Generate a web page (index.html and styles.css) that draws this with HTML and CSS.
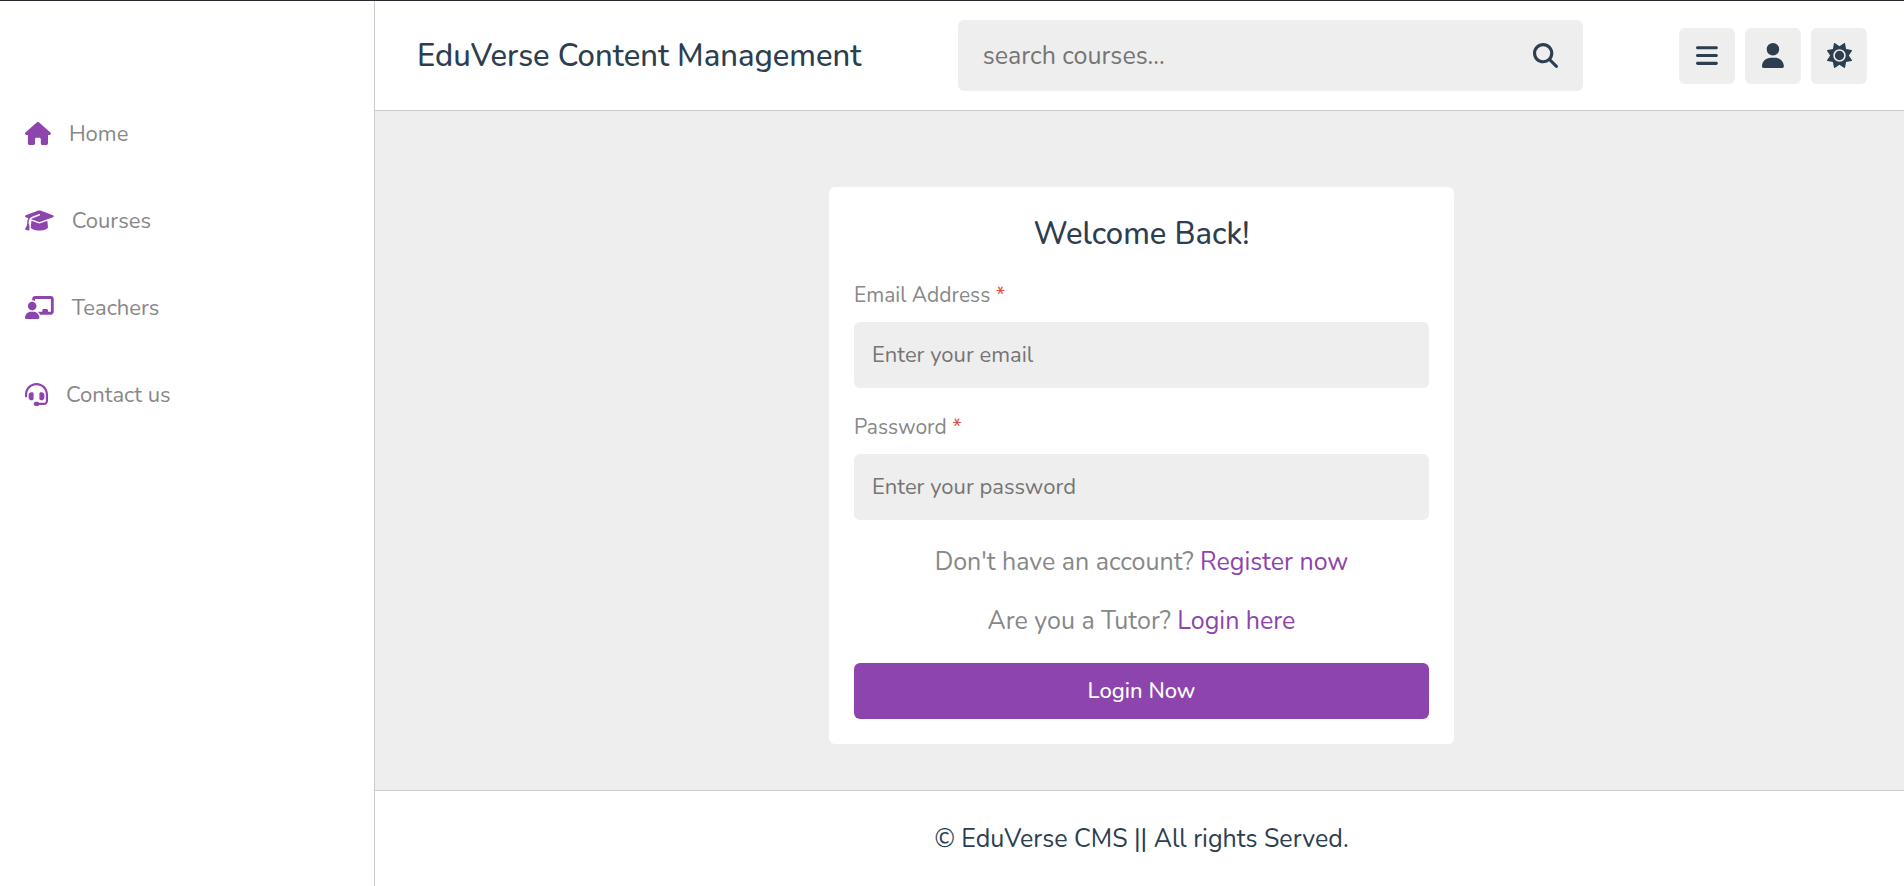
FILE: index.html
```html
<!DOCTYPE html>
<html lang="en">
<head>
<meta charset="utf-8">
<meta name="viewport" content="width=device-width, initial-scale=1">
<title>EduVerse Content Management</title>
<link rel="stylesheet" href="styles.css">
</head>
<body class="page">
<aside class="sidebar">
  <nav class="nav">
    <a class="nav-link" href="#"><svg class="nav-icon" viewBox="0 0 576 512" aria-hidden="true"><path d="M575.8 255.5c0 18-15 32.1-32 32.1h-32l.7 160.2c0 2.700-.2 5.400-.5 8.100V472c0 22.100-17.900 40-40 40H456c-1.100 0-2.200 0-3.300-.1c-1.400.1-2.800.1-4.200.1H416 392c-22.100 0-40-17.900-40-40V448 384c0-17.700-14.300-32-32-32H256c-17.700 0-32 14.300-32 32v64 24c0 22.100-17.900 40-40 40H160 128.100c-1.500 0-3-.1-4.500-.2c-1.200.1-2.400.2-3.600.2H104c-22.100 0-40-17.900-40-40V360c0-.9 0-1.900.1-2.800V287.600H32c-18 0-32-14-32-32.100c0-9 3-17 10-24L266.400 8c7-7 15-8 22-8s15 2 21 7L564.800 231.500c8 7 12 15 11 24z"/></svg><span>Home</span></a>
    <a class="nav-link" href="#"><svg class="nav-icon" viewBox="0 0 640 512" aria-hidden="true"><path d="M320 32c-8.100 0-16.100 1.400-23.700 4.100L15.800 137.400C6.300 140.900 0 149.900 0 160s6.300 19.100 15.800 22.600l57.900 20.900C57.300 229.300 48 259.800 48 291.900v28.100c0 28.400-10.800 57.700-22.300 80.800c-6.500 13-13.900 25.800-22.500 37.600C0 442.700-.9 448.300.9 453.400s6 8.900 11.200 10.200l64 16c4.200 1.100 8.700.3 12.400-2s6.300-6.100 7.100-10.400c8.600-42.800 4.300-81.200-2.100-108.700C90.300 344.300 86 329.800 80 316.500V291.900c0-30.200 10.200-58.700 27.900-81.500c12.900-15.500 29.600-28 49.200-35.700l157-61.700c8.200-3.200 17.500.8 20.700 9s-.8 17.500-9 20.700l-157 61.700c-12.400 4.900-23.300 12.400-32.200 21.600l159.600 57.600c7.600 2.700 15.600 4.100 23.700 4.100s16.100-1.400 23.700-4.100L624.200 182.600c9.500-3.400 15.800-12.500 15.800-22.600s-6.300-19.100-15.800-22.600L343.700 36.100C336.100 33.400 328.100 32 320 32zM128 408c0 35.300 86 72 192 72s192-36.700 192-72L496.700 262.600 354.500 314c-11.100 4-22.800 6-34.500 6s-23.500-2-34.500-6L143.300 262.600 128 408z"/></svg><span>Courses</span></a>
    <a class="nav-link" href="#"><svg class="nav-icon" viewBox="0 0 640 512" aria-hidden="true"><path d="M160 64c0-35.300 28.700-64 64-64H576c35.300 0 64 28.700 64 64V352c0 35.300-28.700 64-64 64H336.800c-11.800-25.500-29.900-47.500-52.400-64H384V320c0-17.700 14.300-32 32-32h64c17.700 0 32 14.300 32 32v32h64V64L224 64v49.100C205.200 102.200 183.300 96 160 96V64zm0 64a96 96 0 1 1 0 192 96 96 0 1 1 0-192zM133.300 352h53.300C260.300 352 320 411.700 320 485.300c0 14.700-11.900 26.700-26.700 26.700H26.700C11.900 512 0 500.100 0 485.300C0 411.700 59.700 352 133.300 352z"/></svg><span>Teachers</span></a>
    <a class="nav-link" href="#"><svg class="nav-icon" viewBox="0 0 512 512" aria-hidden="true"><path d="M256 48C141.100 48 48 141.100 48 256v40c0 13.300-10.700 24-24 24s-24-10.700-24-24V256C0 114.600 114.600 0 256 0S512 114.600 512 256V400.100c0 48.600-39.400 88-88.100 88L313.600 488c-8.300 14.300-23.800 24-41.600 24H240c-26.500 0-48-21.500-48-48s21.500-48 48-48h32c17.800 0 33.300 9.700 41.600 24l110.400.1c22.100 0 40-17.900 40-40V256c0-114.900-93.100-208-208-208zM144 208h16c17.700 0 32 14.300 32 32V352c0 17.700-14.300 32-32 32H144c-35.300 0-64-28.700-64-64V272c0-35.300 28.700-64 64-64zm224 0c35.300 0 64 28.700 64 64v48c0 35.300-28.700 64-64 64H352c-17.700 0-32-14.300-32-32V240c0-17.700 14.300-32 32-32h16z"/></svg><span>Contact us</span></a>
  </nav>
</aside>
<div class="content">
  <header class="header">
    <a class="logo" href="#">EduVerse Content Management</a>
    <form class="search">
      <input class="search-input" type="search" placeholder="search courses..." aria-label="Search courses">
      <button class="search-button" type="submit" aria-label="Search"><svg class="icon" viewBox="0 0 512 512" aria-hidden="true"><path d="M416 208c0 45.900-14.900 88.300-40 122.700L502.600 457.400c12.500 12.500 12.500 32.800 0 45.300s-32.800 12.500-45.300 0L330.700 376c-34.400 25.200-76.800 40-122.700 40C93.100 416 0 322.900 0 208S93.100 0 208 0S416 93.100 416 208zM208 352a144 144 0 1 0 0-288 144 144 0 1 0 0 288z"/></svg></button>
    </form>
    <div class="actions">
      <button class="action" type="button" aria-label="Menu"><svg class="icon" viewBox="0 0 448 512" aria-hidden="true"><path d="M0 96C0 78.300 14.300 64 32 64H416c17.700 0 32 14.300 32 32s-14.300 32-32 32H32C14.300 128 0 113.700 0 96zM0 256c0-17.700 14.300-32 32-32H416c17.700 0 32 14.300 32 32s-14.300 32-32 32H32c-17.700 0-32-14.300-32-32zM448 416c0 17.700-14.300 32-32 32H32c-17.700 0-32-14.300-32-32s14.300-32 32-32H416c17.700 0 32 14.300 32 32z"/></svg></button>
      <button class="action" type="button" aria-label="Profile"><svg class="icon" viewBox="0 0 448 512" aria-hidden="true"><path d="M224 256A128 128 0 1 0 224 0a128 128 0 1 0 0 256zm-45.700 48C79.800 304 0 383.800 0 482.300C0 498.700 13.300 512 29.700 512H418.300c16.400 0 29.700-13.300 29.700-29.700C448 383.800 368.200 304 269.700 304H178.300z"/></svg></button>
      <button class="action" type="button" aria-label="Toggle theme"><svg class="icon" viewBox="0 0 512 512" aria-hidden="true"><path d="M361.500 1.200c5 2.100 8.600 6.600 9.600 11.900L391 121l107.900 19.800c5.300 1 9.800 4.600 11.900 9.600s1.500 10.700-1.600 15.200L446.900 256l62.300 90.300c3.100 4.500 3.700 10.200 1.600 15.200s-6.600 8.600-11.900 9.600L391 391 371.100 498.900c-1 5.300-4.600 9.800-9.600 11.900s-10.700 1.500-15.200-1.600L256 446.900l-90.300 62.300c-4.500 3.100-10.200 3.700-15.200 1.600s-8.600-6.600-9.600-11.900L121 391 13.100 371.100c-5.300-1-9.800-4.600-11.900-9.600s-1.500-10.700 1.600-15.200L65.100 256 2.800 165.700c-3.100-4.500-3.700-10.200-1.600-15.200s6.600-8.600 11.900-9.600L121 121 140.900 13.100c1-5.300 4.600-9.800 9.600-11.900s10.700-1.500 15.200 1.600L256 65.100 346.300 2.800c4.500-3.100 10.200-3.700 15.200-1.600zM160 256a96 96 0 1 1 192 0 96 96 0 1 1-192 0zm224 0a128 128 0 1 0-256 0 128 128 0 1 0 256 0z"/></svg></button>
    </div>
  </header>
  <main class="main">
    <form class="card">
      <h1 class="card-title">Welcome Back!</h1>
      <label class="label" for="email">Email Address <span class="required">*</span></label>
      <input class="field" id="email" type="email" placeholder="Enter your email">
      <label class="label" for="password">Password <span class="required">*</span></label>
      <input class="field" id="password" type="password" placeholder="Enter your password">
      <p class="note">Don't have an account? <a class="note-link" href="#">Register now</a></p>
      <p class="note">Are you a Tutor? <a class="note-link" href="#">Login here</a></p>
      <button class="submit" type="submit">Login Now</button>
    </form>
  </main>
  <footer class="footer">© EduVerse CMS || All rights Served.</footer>
</div>
</body>
</html>
```
FILE: styles.css
```css
:root {
  --purple: #8e44ad;
  --ink: #2c3e50;
  --muted: #888;
  --placeholder: #757575;
  --surface: #eee;
  --line: #ccc;
  --radius: 6px;
}

* {
  box-sizing: border-box;
}

a {
  color: inherit;
  text-decoration: none;
}

input,
button {
  margin: 0;
  padding: 0;
  border: 0;
  outline: 0;
  background: none;
  font-family: inherit;
}

button {
  cursor: pointer;
}

svg {
  display: block;
  fill: currentColor;
}

.page {
  display: flex;
  min-height: 100vh;
  margin: 0;
  border-top: 1px solid #2b2a33;
  background: #fff;
  color: var(--ink);
  font-family: Nunito, Lato, "Open Sans", sans-serif;
}

.sidebar {
  flex: 0 0 375px;
  border-right: 1px solid var(--line);
}

.nav {
  display: flex;
  flex-direction: column;
  padding-top: 89px;
}

.nav-link {
  display: flex;
  align-items: center;
  gap: 18px;
  height: 87px;
  padding: 0 25px;
  color: var(--muted);
  font-size: 22px;
}

.nav-icon {
  height: 23px;
  color: var(--purple);
}

.content {
  display: flex;
  flex: 1;
  flex-direction: column;
  min-width: 0;
}

.header {
  display: flex;
  align-items: center;
  justify-content: space-between;
  padding: 19px 37px 19px 42px;
  border-bottom: 1px solid var(--line);
}

.logo {
  font-size: 31px;
  font-weight: 500;
}

.search {
  display: flex;
  align-items: center;
  width: 625px;
  height: 71px;
  padding: 0 25px;
  border-radius: var(--radius);
  background: var(--surface);
}

.search-input {
  flex: 1;
  min-width: 0;
  font-size: 25px;
}

.search-button {
  color: var(--ink);
}

.icon {
  height: 25px;
}

.actions {
  display: flex;
  gap: 10px;
}

.action {
  display: grid;
  place-items: center;
  width: 56px;
  height: 56px;
  border-radius: var(--radius);
  background: var(--surface);
  color: var(--ink);
}

.main {
  display: flex;
  flex: 1;
  align-items: flex-start;
  justify-content: center;
  padding: 76px 0 46px 4px;
  background: var(--surface);
}

.card {
  display: flex;
  flex-direction: column;
  width: 625px;
  padding: 25px;
  border-radius: var(--radius);
  background: #fff;
}

.card-title {
  margin: 0 0 25px;
  font-size: 31px;
  font-weight: 500;
  line-height: 44px;
  text-align: center;
}

.label {
  margin-bottom: 13px;
  color: var(--muted);
  font-size: 21px;
  line-height: 28px;
}

.required {
  color: #e74c3c;
}

.field {
  height: 66px;
  margin-bottom: 25px;
  padding: 0 18px;
  border-radius: var(--radius);
  background: var(--surface);
  color: var(--ink);
  font-size: 22px;
}

::placeholder {
  color: var(--placeholder);
}

.note {
  margin: 0 0 24px;
  color: var(--muted);
  font-size: 25px;
  line-height: 35px;
  text-align: center;
}

.note-link {
  color: var(--purple);
}

.submit {
  height: 56px;
  border-radius: var(--radius);
  background: var(--purple);
  color: #fff;
  font-size: 22px;
  font-weight: 500;
}

.footer {
  padding: 32px 0 32px 4px;
  border-top: 1px solid var(--line);
  font-size: 25px;
  line-height: 32px;
  text-align: center;
}
```
